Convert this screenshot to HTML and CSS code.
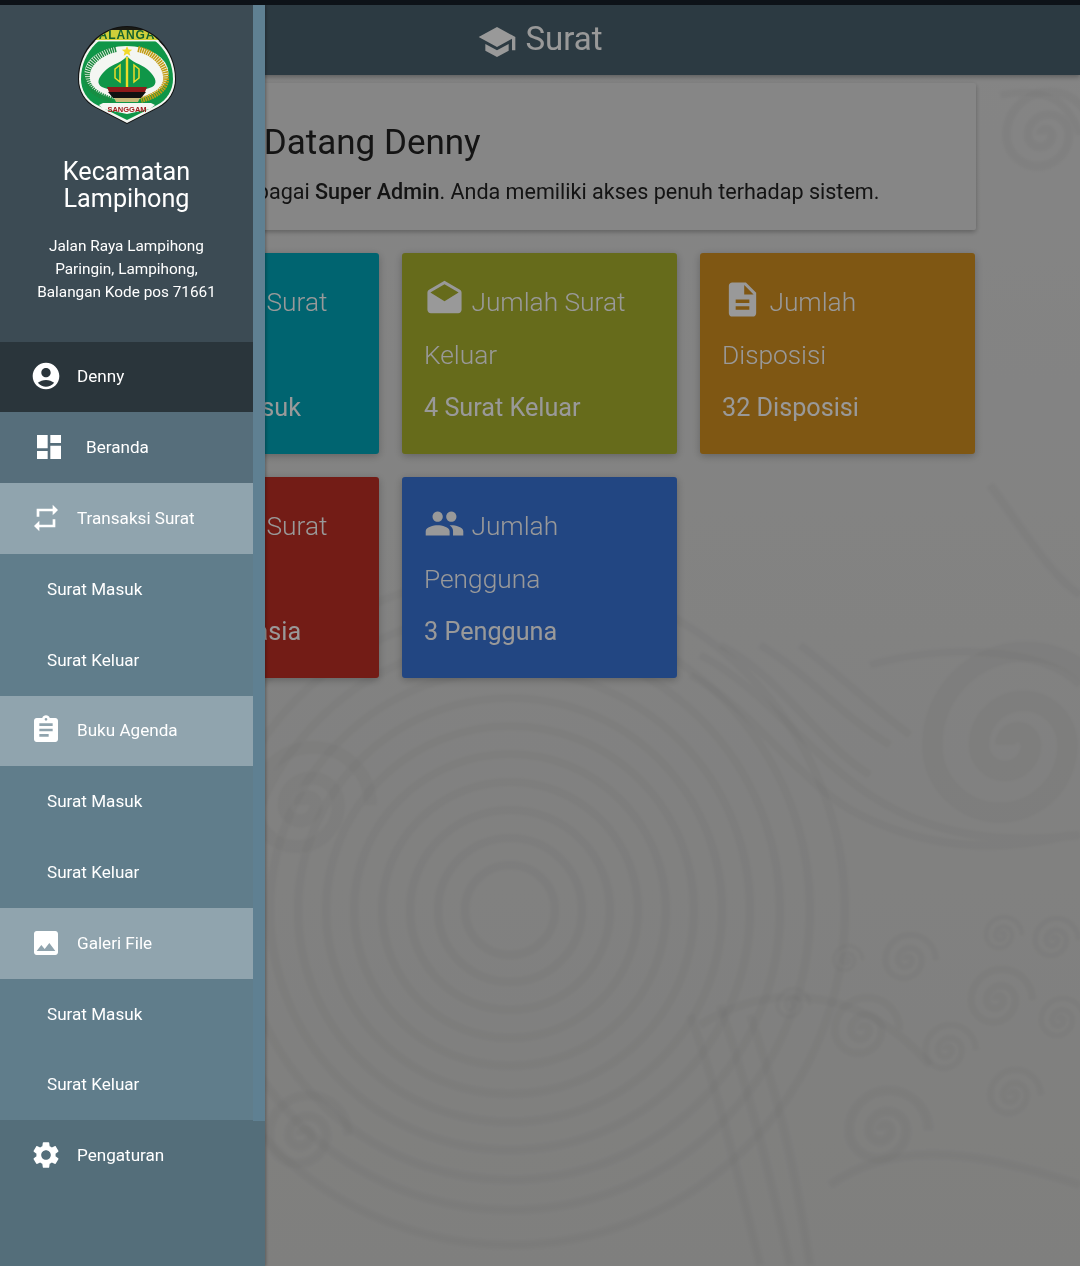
FILE: index.html
```html
<!DOCTYPE html>
<html lang="id">
<head>
<meta charset="utf-8">
<title>Surat</title>
<link rel="stylesheet" href="styles.css">
</head>
<body>
<div class="statusbar"></div>
<div class="app">
  <svg class="pattern" viewBox="0 0 1080 1261" preserveAspectRatio="none" aria-hidden="true">
    <defs>
      <filter id="soft"><feGaussianBlur stdDeviation="1.8"/></filter>
      <path id="sp" d="M0 0a5 5 0 0 1 10 0a10 10 0 0 1-20 0a17 17 0 0 1 34 0a26 26 0 0 1-52 0a36 36 0 0 1 72 0"/>
    </defs>
    <g class="pattern-lines" filter="url(#soft)">
      <circle cx="510" cy="905" r="45"/><circle cx="510" cy="905" r="72"/><circle cx="510" cy="905" r="100"/>
      <circle cx="510" cy="905" r="128"/><circle cx="510" cy="905" r="156"/><circle cx="510" cy="905" r="184"/>
      <circle cx="510" cy="905" r="212"/><circle cx="510" cy="905" r="240"/><circle cx="510" cy="905" r="270"/>
      <circle cx="510" cy="905" r="300"/><circle cx="510" cy="905" r="335"/>
      <use href="#sp" transform="translate(1005 740) scale(2.6)"/>
      <use href="#sp" transform="translate(300 800) scale(1.6)"/>
      <use href="#sp" transform="translate(1040 130) scale(1.2)"/>
      <use href="#sp" transform="translate(905 955) scale(.7)"/>
      <use href="#sp" transform="translate(845 955) scale(.4)"/>
      <use href="#sp" transform="translate(1000 930) scale(.5)"/>
      <use href="#sp" transform="translate(1052 935) scale(.6)"/>
      <use href="#sp" transform="translate(995 995) scale(.85)"/>
      <use href="#sp" transform="translate(1058 1015) scale(.6)"/>
      <use href="#sp" transform="translate(860 1025) scale(.9)"/>
      <use href="#sp" transform="translate(945 1045) scale(.7)"/>
      <use href="#sp" transform="translate(1010 1090) scale(.7)"/>
      <use href="#sp" transform="translate(880 1125) scale(1.1)"/>
      <use href="#sp" transform="translate(790 1000) scale(.45)"/>
      <use href="#sp" transform="translate(300 1130) scale(1.1)"/>
      <path d="M690 670c60 30 110 110 170 140s130 40 210 20M700 650c60 30 110 100 170 140s130 50 210 40M720 640c60 30 100 100 150 130M760 640c50 30 80 70 130 100M800 640c40 30 70 60 110 90"/>
      <path d="M690 1010c30 80 50 170 70 250M720 1000c30 90 50 170 70 260M750 1010c20 60 40 120 60 250"/>
      <path d="M870 660c70-20 170-20 210 20M1000 90c50-10 70 10 80 40M990 480c30 40 60 90 90 110M700 1020c80-50 170-30 230 40M830 1180c70-50 160-30 250 0"/>
    </g>
  </svg>

  <header class="topbar">
    <svg class="topbar-icon" viewBox="0 0 24 24"><path d="M5 13.18v4L12 21l7-3.82v-4L12 17l-7-3.82zM12 3L1 9l11 6 9-4.91V17h2V9L12 3z"/></svg>
    <span>Surat</span>
  </header>

  <main class="content">
    <section class="welcome">
      <h1>Selamat Datang Denny</h1>
      <p>Anda login sebagai <strong>Super Admin</strong>. Anda memiliki akses penuh terhadap sistem.</p>
    </section>
    <section class="stats">
      <article class="stat stat-cyan">
        <h2><svg viewBox="0 0 24 24"><path d="M20 4H4c-1.1 0-2 .9-2 2v12c0 1.1.9 2 2 2h16c1.1 0 2-.9 2-2V6c0-1.1-.9-2-2-2zm0 4l-8 5-8-5V6l8 5 8-5v2z"/></svg> Jumlah Surat Masuk</h2>
        <p>12 Surat Masuk</p>
      </article>
      <article class="stat stat-lime">
        <h2><svg viewBox="0 0 24 24"><path d="M21.99 8c0-.72-.37-1.35-.94-1.7L12 1 2.95 6.3C2.38 6.65 2 7.28 2 8v10c0 1.1.9 2 2 2h16c1.1 0 2-.9 2-2l-.01-10zM12 13L3.74 7.84 12 3l8.26 4.84L12 13z"/></svg> Jumlah Surat Keluar</h2>
        <p>4 Surat Keluar</p>
      </article>
      <article class="stat stat-amber">
        <h2><svg viewBox="0 0 24 24"><path d="M14 2H6c-1.1 0-1.99.9-1.99 2L4 20c0 1.1.89 2 1.99 2H18c1.1 0 2-.9 2-2V8l-6-6zm2 16H8v-2h8v2zm0-4H8v-2h8v2zm-3-5V3.5L18.5 9H13z"/></svg> Jumlah Disposisi</h2>
        <p>32 Disposisi</p>
      </article>
      <article class="stat stat-red">
        <h2><svg viewBox="0 0 24 24"><path d="M18 8h-1V6c0-2.76-2.24-5-5-5S7 3.24 7 6v2H6c-1.1 0-2 .9-2 2v10c0 1.1.9 2 2 2h12c1.1 0 2-.9 2-2V10c0-1.1-.9-2-2-2z"/></svg> Jumlah Surat Rahasia</h2>
        <p>7 Surat Rahasia</p>
      </article>
      <article class="stat stat-blue">
        <h2><svg viewBox="0 0 24 24"><path d="M16 11c1.66 0 2.99-1.34 2.99-3S17.66 5 16 5c-1.66 0-3 1.34-3 3s1.34 3 3 3zm-8 0c1.66 0 2.99-1.34 2.99-3S9.66 5 8 5C6.34 5 5 6.34 5 8s1.34 3 3 3zm0 2c-2.33 0-7 1.17-7 3.5V19h14v-2.5c0-2.33-4.67-3.5-7-3.5zm8 0c-.29 0-.62.02-.97.05 1.16.84 1.97 1.97 1.97 3.45V19h6v-2.5c0-2.33-4.67-3.5-7-3.5z"/></svg> Jumlah Pengguna</h2>
        <p>3 Pengguna</p>
      </article>
    </section>
  </main>

  <div class="overlay"></div>

  <nav class="sidenav">
    <div class="brand">
      <svg class="logo" viewBox="78 27 98 98">
        <defs>
          <clipPath id="shield"><path d="M127 28C102 28 79 51 79 80c0 12 6 22 17 28l31 16 31-16c11-6 17-16 17-28 0-29-23-52-48-52z"/></clipPath>
        </defs>
        <path fill="#111" d="M127 27C101 27 78 50 78 80c0 12 6 23 18 29l31 16 31-16c12-6 18-17 18-29 0-30-23-53-49-53z"/>
        <path fill="#f4f6f2" d="M127 29C102 29 79 51 79 80c0 12 6 22 17 28l31 16 31-16c11-6 17-16 17-28 0-29-23-51-48-51z"/>
        <path fill="#0f9648" d="M127 31C104 31 81 52 81 80c0 11 6 21 16 26l30 15 30-15c10-5 16-15 16-26 0-28-23-49-46-49z"/>
        <g clip-path="url(#shield)">
          <rect x="78" y="27" width="98" height="4" fill="#1a1a14"/>
          <rect x="78" y="31" width="98" height="10" fill="#cfd03a"/>
          <rect x="78" y="41" width="98" height="1.4" fill="#f4f6f2"/>
          <text class="logo-top" x="127" y="40.4">BALANGAN</text>
        </g>
        <ellipse cx="126.5" cy="74" rx="42" ry="27" fill="#f4f6f2"/>
        <path fill="none" stroke="#1c8a40" stroke-width="6" stroke-dasharray="1.5 .8" d="M116 50C98 54 85 67 87 80c1 10 11 17 26 21"/>
        <path fill="none" stroke="#c29c14" stroke-width="6" stroke-dasharray="1.6 .7" d="M138 50c18 4 29 18 28 31-1 10-11 16-25 20"/>
        <path fill="#0f9648" d="M127 57c4 6 14 8 20 13 6 5 10 11 8 15-2 5-12 6-28 6s-26-1-28-6c-2-4 2-10 8-15 6-5 16-7 20-13z"/>
        <path fill="#f2d92a" d="M127 47l1.5 3.4 3.7.3-2.8 2.4.9 3.6-3.3-2-3.3 2 .9-3.6-2.8-2.4 3.7-.3z"/>
        <path fill="none" stroke="#ecdc2a" stroke-width="1.5" d="M120 66l-5 4v9l5 4zM134 66l5 4v9l-5 4z"/>
        <rect x="125.8" y="58" width="2.4" height="31" fill="#ecdc2a"/>
        <path fill="#8c1a1a" d="M107 88h40l-2 5h-36z"/>
        <path fill="#111" d="M108 93h38l-5 6h-28z"/>
        <path fill="#c9b978" d="M114 99h26l-2 4h-22z"/>
        <path fill="#f4f6f2" d="M99 106l4-2h48l4 2-5 4-23 5-24-5z"/>
        <text class="logo-motto" x="127" y="112.5">SANGGAM</text>
      </svg>
      <h2>Kecamatan<br>Lampihong</h2>
      <p>Jalan Raya Lampihong<br>Paringin, Lampihong,<br>Balangan Kode pos 71661</p>
    </div>

    <ul class="menu">
      <li class="row row-user">
        <svg viewBox="0 0 24 24"><path d="M12 2C6.48 2 2 6.48 2 12s4.48 10 10 10 10-4.48 10-10S17.52 2 12 2zm0 4c1.93 0 3.5 1.57 3.5 3.5S13.93 13 12 13s-3.5-1.57-3.5-3.5S10.07 6 12 6zm0 14c-2.03 0-4.43-.82-6.14-2.88C7.55 15.8 9.68 15 12 15s4.45.8 6.14 2.12C16.43 19.18 14.03 20 12 20z"/></svg>
        Denny
      </li>
      <li class="row row-home">
        <svg viewBox="0 0 24 24"><path d="M3 13h8V3H3v10zm0 8h8v-6H3v6zm10 0h8V11h-8v10zm0-18v6h8V3h-8z"/></svg>
        Beranda
      </li>
      <li class="row row-open">
        <svg viewBox="0 0 24 24"><path d="M7 7h10v3l4-4-4-4v3H5v6h2V7zm10 10H7v-3l-4 4 4 4v-3h12v-6h-2v4z"/></svg>
        Transaksi Surat
      </li>
      <li class="row row-sub">Surat Masuk</li>
      <li class="row row-sub">Surat Keluar</li>
      <li class="row row-open">
        <svg viewBox="0 0 24 24"><path d="M19 3h-4.18C14.4 1.84 13.3 1 12 1c-1.3 0-2.4.84-2.82 2H5c-1.1 0-2 .9-2 2v14c0 1.1.9 2 2 2h14c1.1 0 2-.9 2-2V5c0-1.1-.9-2-2-2zm-7 0c.55 0 1 .45 1 1s-.45 1-1 1-1-.45-1-1 .45-1 1-1zm2 14H7v-2h7v2zm3-4H7v-2h10v2zm0-4H7V7h10v2z"/></svg>
        Buku Agenda
      </li>
      <li class="row row-sub">Surat Masuk</li>
      <li class="row row-sub">Surat Keluar</li>
      <li class="row row-open">
        <svg viewBox="0 0 24 24"><path d="M21 19V5c0-1.1-.9-2-2-2H5c-1.1 0-2 .9-2 2v14c0 1.1.9 2 2 2h14c1.1 0 2-.9 2-2zM8.5 13.5l2.5 3.01L14.5 12l4.5 6H5l3.5-4.5z"/></svg>
        Galeri File
      </li>
      <li class="row row-sub">Surat Masuk</li>
      <li class="row row-sub">Surat Keluar</li>
      <li class="row row-plain">
        <svg viewBox="0 0 24 24"><path d="M19.14 12.94c.04-.3.06-.61.06-.94 0-.32-.02-.64-.07-.94l2.03-1.58c.18-.14.23-.41.12-.61l-1.92-3.32c-.12-.22-.37-.29-.59-.22l-2.39.96c-.5-.38-1.03-.7-1.62-.94l-.36-2.54c-.04-.24-.24-.41-.48-.41h-3.84c-.24 0-.43.17-.47.41l-.36 2.54c-.59.24-1.13.57-1.62.94l-2.39-.96c-.22-.08-.47 0-.59.22L2.74 8.87c-.12.21-.08.47.12.61l2.03 1.58c-.05.3-.09.63-.09.94s.02.64.07.94l-2.03 1.58c-.18.14-.23.41-.12.61l1.92 3.32c.12.22.37.29.59.22l2.39-.96c.5.38 1.03.7 1.62.94l.36 2.54c.05.24.24.41.48.41h3.84c.24 0 .44-.17.47-.41l.36-2.54c.59-.24 1.13-.56 1.62-.94l2.39.96c.22.08.47 0 .59-.22l1.92-3.32c.12-.22.07-.47-.12-.61l-2.01-1.58zM12 15.6c-1.98 0-3.6-1.62-3.6-3.6s1.62-3.6 3.6-3.6 3.6 1.62 3.6 3.6-1.62 3.6-3.6 3.6z"/></svg>
        Pengaturan
      </li>
    </ul>
  </nav>
</div>
</body>
</html>
```

FILE: styles.css
```css
* { box-sizing: border-box; }

html, body {
  margin: 0;
  height: 100%;
  overflow: hidden;
}

body {
  display: flex;
  flex-direction: column;
  background: #0d1218;
  font-family: Roboto, "Liberation Sans", sans-serif;
}

.statusbar {
  height: 5px;
  flex: none;
  background: #0d1218;
}

.app {
  position: relative;
  flex: 1;
  min-height: 0;
  background: linear-gradient(#dedede, #d4d4d2);
  overflow: hidden;
}

.pattern {
  position: absolute;
  inset: 0;
  width: 100%;
  height: 100%;
}

.pattern-lines {
  fill: none;
  stroke: #000;
  stroke-opacity: .028;
  stroke-width: 8;
}

.pattern-lines * { vector-effect: non-scaling-stroke; }

.topbar {
  position: relative;
  display: flex;
  align-items: center;
  justify-content: center;
  gap: 8px;
  height: 70px;
  padding-bottom: 4px;
  background: #4a616e;
  box-shadow: 0 2px 5px rgba(0, 0, 0, .3);
  color: #fff;
  font-size: 33px;
  font-weight: 400;
}

.topbar-icon {
  width: 40px;
  height: 40px;
  fill: #fff;
  margin-top: 7px;
}

.content {
  position: relative;
  width: 871.5px;
  margin-left: 104px;
  padding-top: 8px;
}

.welcome {
  height: 147px;
  padding: 39px 23px 0;
  background: #e0e0e0;
  border-radius: 2px;
  box-shadow: 0 2px 5px rgba(0, 0, 0, .28);
  color: #222;
}

.welcome h1 {
  margin: 0;
  font-size: 35px;
  line-height: 41px;
  font-weight: 400;
  white-space: nowrap;
}

.welcome p {
  margin: 15px 0 0;
  font-size: 21.55px;
  line-height: 28px;
  white-space: nowrap;
}

.welcome strong { font-weight: 500; }

.stats {
  display: grid;
  grid-template-columns: repeat(3, 275px);
  grid-auto-rows: 201px;
  gap: 23px;
  margin-top: 23px;
}

.stat {
  padding: 23px 22px 0;
  border-radius: 3px;
  box-shadow: 0 2px 8px rgba(0, 0, 0, .25);
  color: #fff;
}

.stat h2 {
  margin: 0;
  font-size: 26.3px;
  line-height: 53px;
  font-weight: 300;
}

.stat h2 svg {
  width: 41px;
  height: 41px;
  fill: #fff;
  vertical-align: -9px;
}

.stat p {
  margin: -1px 0 0;
  font-size: 25.2px;
  line-height: 53px;
  font-weight: 400;
}

.stat-cyan { background: #00a7bb; }
.stat-lime { background: #aab22e; }
.stat-amber { background: #d49120; }
.stat-red { background: #c02f25; }
.stat-blue { background: #3a75d9; }

.overlay {
  position: absolute;
  inset: 0;
  background: rgba(0, 0, 0, .4);
}

.sidenav {
  position: absolute;
  top: 0;
  left: 0;
  bottom: 0;
  width: 265px;
  display: flex;
  flex-direction: column;
  background: linear-gradient(#5f8092 0, #5f8092 1116px, #546e7a 1116px);
  box-shadow: 1px 0 3px rgba(0, 0, 0, .3);
}

.brand {
  width: 253px;
  height: 336.6px;
  flex: none;
  padding-top: 21px;
  background: #3c4b54;
  color: #fff;
  text-align: center;
}

.logo {
  display: block;
  width: 98px;
  height: 98px;
  margin: 0 auto;
}

.logo-top {
  font: 900 12px "Liberation Sans", sans-serif;
  fill: #14632f;
  text-anchor: middle;
  letter-spacing: .9px;
}

.logo-motto {
  font: 700 7.5px "Liberation Sans", sans-serif;
  fill: #a01c1c;
  text-anchor: middle;
}

.brand h2 {
  margin: 34px 0 0;
  font-size: 25.2px;
  line-height: 27px;
  font-weight: 400;
}

.brand p {
  margin: 23px 0 0;
  font-size: 15.35px;
  line-height: 23px;
}

.menu {
  list-style: none;
  margin: 0;
  padding: 0;
  width: 253px;
}

.row {
  display: flex;
  align-items: center;
  gap: 15px;
  height: 70.8px;
  padding-left: 30px;
  padding-bottom: 1px;
  color: #fff;
  font-size: 17.1px;
  background: #607d8b;
}

.row svg {
  width: 32px;
  height: 32px;
  flex: none;
  fill: #fff;
}

.row-user { background: #2a353b; }

.row-home {
  gap: 21px;
  padding-left: 33px;
  background: #566e7b;
}

.row-open { background: #90a4ae; }

.row-sub { padding-left: 47px; }

.row-plain { background: #546e7a; }
```
